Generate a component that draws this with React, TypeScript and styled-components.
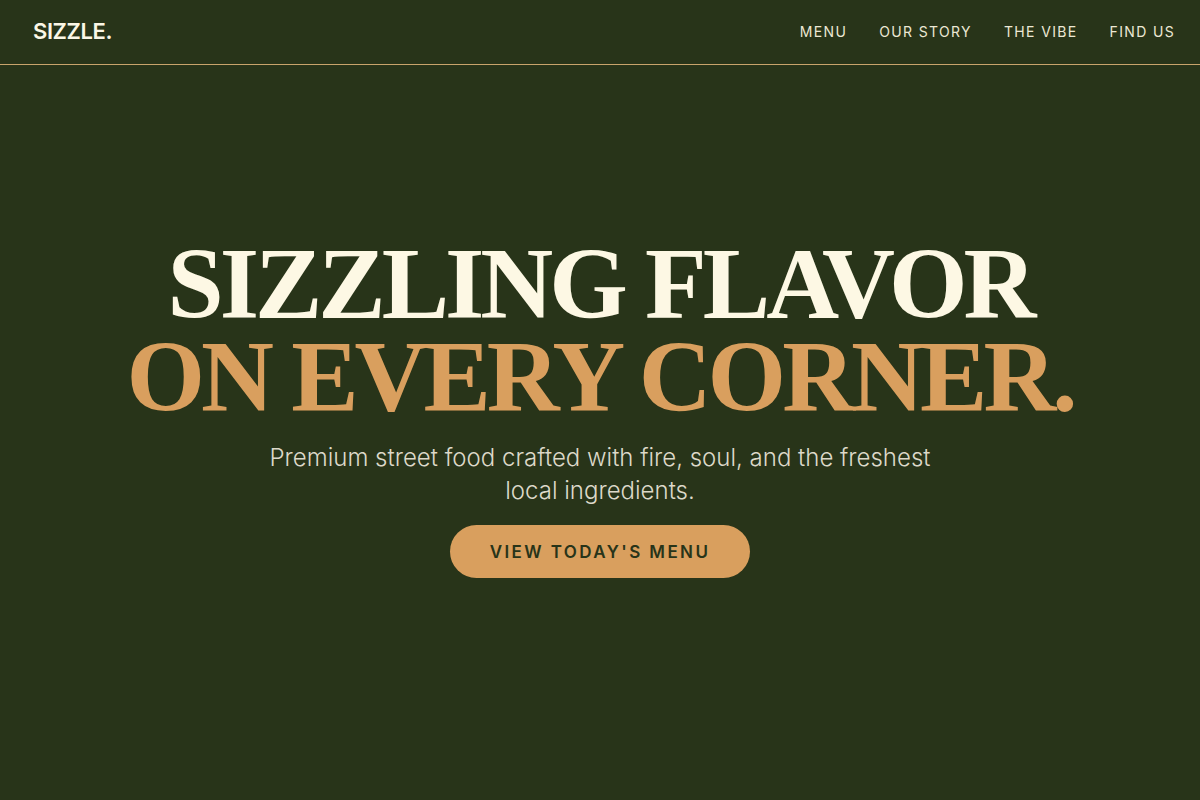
import React from "react";
import styled, { createGlobalStyle } from "styled-components";

const Global = createGlobalStyle`
  html, body { margin: 0; padding: 0; background: #283419; }
  body { font-family: Inter, "Noto Sans", sans-serif; }
  * { box-sizing: border-box; }
`;

const Page = styled.div`
  min-height: 800px;
  background: #283419;
  display: flex;
  flex-direction: column;
`;

const Header = styled.header`
  height: 65px;
  display: flex;
  align-items: center;
  justify-content: space-between;
  padding: 0 25px 2px 33px;
  border-bottom: 1px solid #c9a46c;
`;

const Logo = styled.div`
  font-family: Inter, sans-serif;
  font-weight: 600;
  font-size: 22px;
  letter-spacing: -0.4px;
  color: #fbf7e6;
`;

const Nav = styled.nav`
  display: flex;
  gap: 32px;
`;

const NavLink = styled.a`
  font-family: Inter, sans-serif;
  font-size: 14px;
  font-weight: 400;
  letter-spacing: 1.35px;
  color: #ece8d4;
  text-decoration: none;
`;

const Hero = styled.main`
  flex: 1;
  display: flex;
  flex-direction: column;
  align-items: center;
  padding-top: 173px;
  text-align: center;
`;

const Title = styled.h1`
  margin: 0;
  font-family: "Liberation Serif", "DejaVu Serif", serif;
  font-weight: 700;
  font-size: 101px;
  line-height: 93px;
  letter-spacing: -4px;
`;

const Line = styled.span<{ $accent?: boolean }>`
  display: block;
  color: ${(p) => (p.$accent ? "#d99f5e" : "#fdf8e4")};
`;

const Sub = styled.p`
  margin: 17px 0 0;
  max-width: 690px;
  font-family: Inter, sans-serif;
  font-weight: 300;
  font-size: 24px;
  line-height: 33px;
  color: #ddd9c9;
`;

const Button = styled.button`
  margin-top: 18px;
  width: 300px;
  height: 53px;
  border: none;
  border-radius: 999px;
  background: #d99f5e;
  color: #283419;
  font-family: Inter, sans-serif;
  font-weight: 600;
  font-size: 17px;
  letter-spacing: 2.4px;
  cursor: pointer;
`;

export default function App() {
  return (
    <Page>
      <Global />
      <Header>
        <Logo>SIZZLE.</Logo>
        <Nav>
          <NavLink href="#">MENU</NavLink>
          <NavLink href="#">OUR STORY</NavLink>
          <NavLink href="#">THE VIBE</NavLink>
          <NavLink href="#">FIND US</NavLink>
        </Nav>
      </Header>
      <Hero>
        <Title>
          <Line>SIZZLING FLAVOR</Line>
          <Line $accent>ON EVERY CORNER.</Line>
        </Title>
        <Sub>
          Premium street food crafted with fire, soul, and the freshest local
          ingredients.
        </Sub>
        <Button>VIEW TODAY'S MENU</Button>
      </Hero>
    </Page>
  );
}
